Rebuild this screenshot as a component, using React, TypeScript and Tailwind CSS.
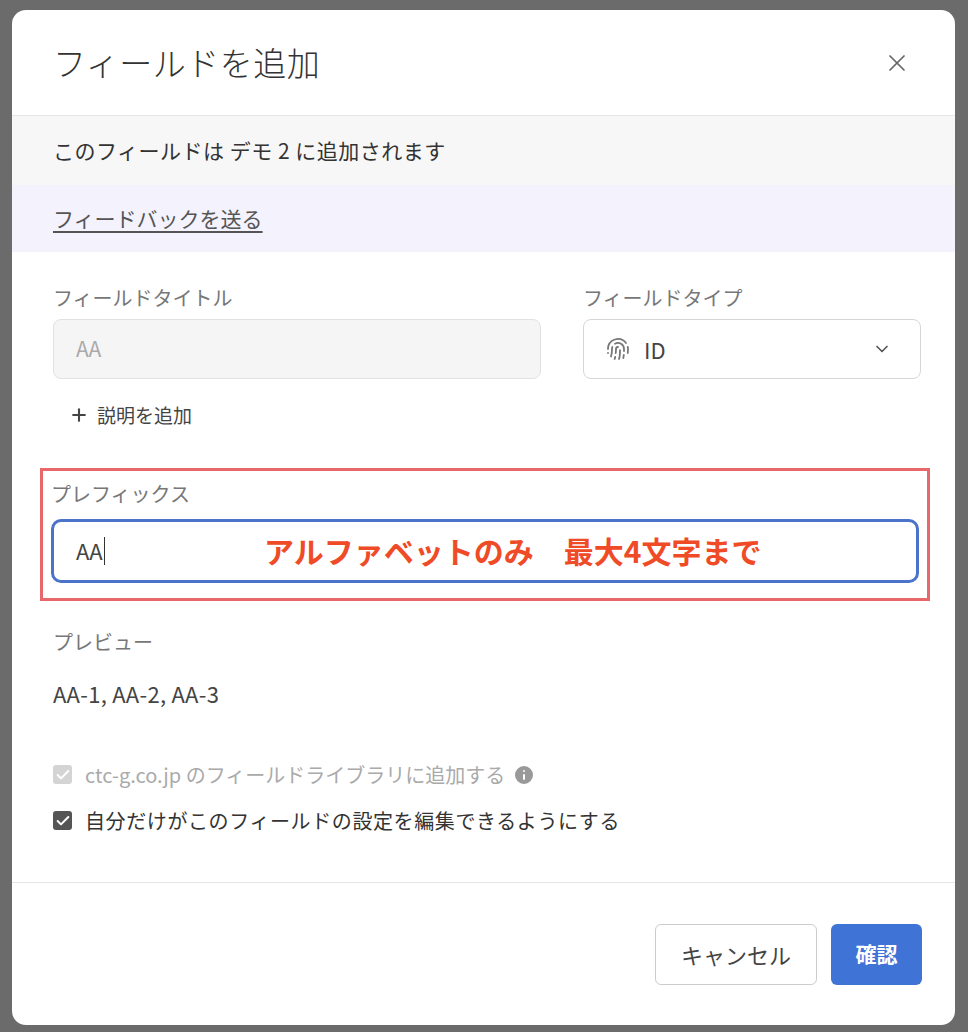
import { X, ChevronDown, Fingerprint, Plus, Info, Check } from "lucide-react";

const font = { fontFamily: '"Noto Sans CJK JP", "Noto Sans", sans-serif' };

export default function App() {
  return (
    <div className="h-[1032px] w-[968px] bg-[#6b6b6b] pt-[10px] pl-[12px]" style={font}>
      <div className="flex h-[1015px] w-[943px] flex-col rounded-[14px] bg-white text-[#333]">
        <div className="flex h-[106px] items-center justify-between border-b border-[#e6e6e6] pl-[41px] pr-[44px]">
          <h1 className="text-[33px] font-light tracking-[0.5px] text-[#333]">フィールドを追加</h1>
          <X className="h-7 w-7 text-[#666]" strokeWidth={1.5} />
        </div>
        <div className="flex h-[69px] items-center bg-[#f7f7f7] pl-[41px] text-[21px] tracking-[0.5px] text-[#333]">
          このフィールドは デモ 2 に追加されます
        </div>
        <div className="flex h-[67px] items-center bg-[#f4f3fd] pl-[41px] text-[21px] text-[#555] underline underline-offset-4">
          フィードバックを送る
        </div>
        <div className="flex-1 pl-[41px] pr-[34px] pt-[31px]">
          <div className="flex gap-[42px]">
            <div className="w-[488px]">
              <div className="text-[20px] text-[#777]">フィールドタイトル</div>
              <div className="mt-[6px] flex h-[60px] items-center rounded-[8px] border border-[#e2e2e2] bg-[#f5f5f5] pl-[22px] text-[21px] text-[#aaa]">AA</div>
            </div>
            <div className="flex-1">
              <div className="text-[20px] text-[#777]">フィールドタイプ</div>
              <div className="mt-[6px] flex h-[60px] items-center rounded-[8px] border border-[#d6d6d6] pl-[22px] pr-[28px] text-[22px]">
                <Fingerprint className="h-6 w-6 text-[#777]" strokeWidth={1.8} />
                <span className="ml-[14px] text-[#444]">ID</span>
                <ChevronDown className="ml-auto h-5 w-5 text-[#555]" strokeWidth={2} />
              </div>
            </div>
          </div>
          <div className="mt-[22px] flex items-center gap-[8px] pl-[16px] text-[19px] text-[#444]">
            <Plus className="h-5 w-5" strokeWidth={2.5} />説明を追加
          </div>
          <div className="-ml-[13px] mt-[38px] w-[890px] border-[3px] border-[#e8676a] px-[8px] pb-[15px] pt-[8px]">
            <div className="text-[20px] text-[#777]">プレフィックス</div>
            <div className="relative mt-[10px] flex h-[64px] items-center rounded-[10px] border-[3px] border-[#4a73c9] pl-[22px] text-[22px] text-[#444]">
              AA<span className="ml-[1px] h-[28px] w-[1.5px] bg-[#333]" />
              <span className="absolute left-[210px] text-[30px] font-bold text-[#ef4b27]">アルファベットのみ　最大4文字まで</span>
            </div>
          </div>
          <div className="mt-[26px] text-[20px] text-[#777]">プレビュー</div>
          <div className="mt-[20px] text-[22px] tracking-[0.3px] text-[#444]">AA-1, AA-2, AA-3</div>
          <div className="mt-[50px] flex items-center gap-[13px] text-[20px] text-[#aaa]">
            <span className="flex h-[19px] w-[19px] items-center justify-center rounded-[3px] bg-[#d4d4d4]"><Check className="h-4 w-4 text-white" strokeWidth={3} /></span>
            ctc-g.co.jp のフィールドライブラリに追加する
            <Info className="-ml-[6px] h-6 w-6 fill-[#999] text-white" />
          </div>
          <div className="mt-[16px] flex items-center gap-[13px] text-[20px] tracking-[0.6px] text-[#333]">
            <span className="flex h-[19px] w-[19px] items-center justify-center rounded-[3px] bg-[#555]"><Check className="h-4 w-4 text-white" strokeWidth={3} /></span>
            自分だけがこのフィールドの設定を編集できるようにする
          </div>
        </div>
        <div className="flex h-[143px] items-center justify-end gap-[14px] border-t border-[#e6e6e6] pr-[33px]">
          <button className="h-[61px] w-[162px] rounded-[6px] border border-[#ccc] text-[22px] text-[#444]">キャンセル</button>
          <button className="h-[61px] w-[91px] rounded-[6px] bg-[#3f73d6] text-[21px] font-bold text-white">確認</button>
        </div>
      </div>
    </div>
  );
}
